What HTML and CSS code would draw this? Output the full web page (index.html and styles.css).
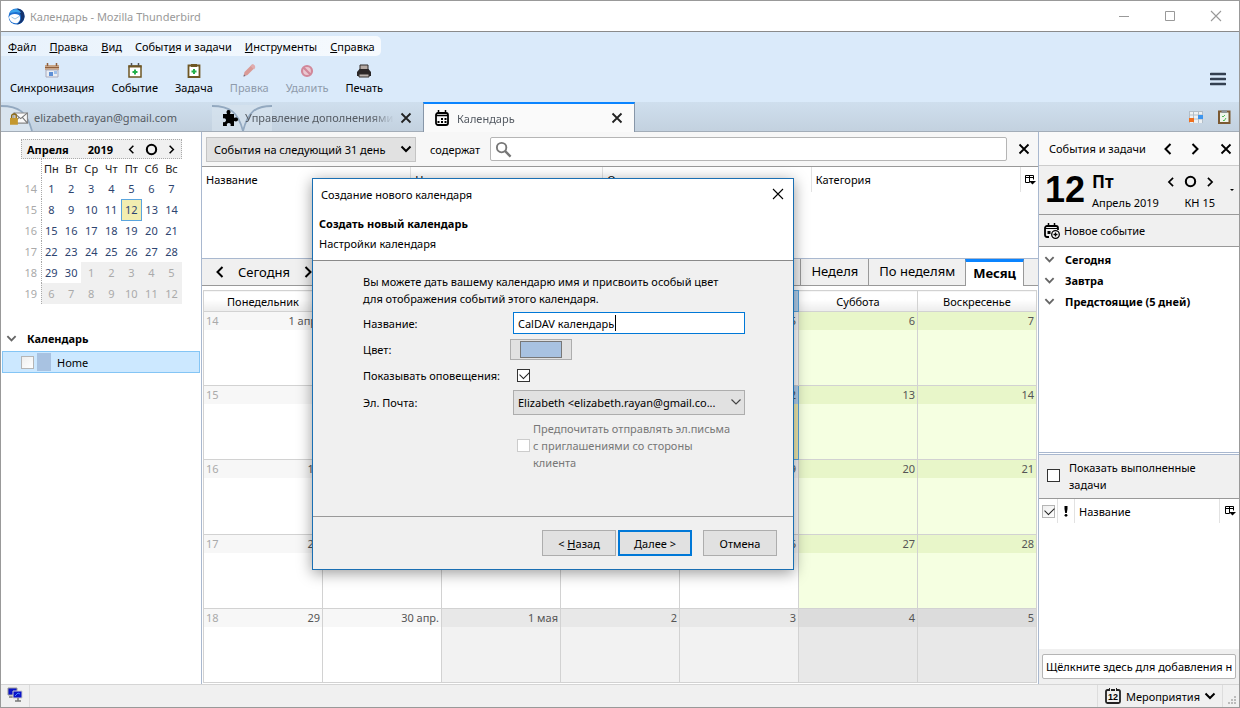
FILE: index.html
```html
<!DOCTYPE html>
<html lang="ru">
<head>
  <meta charset="UTF-8">
  <meta name="viewport" content="width=device-width, initial-scale=1.0">
  <title>Календарь - Mozilla Thunderbird</title>
  <link rel="stylesheet" href="styles.css">
</head>
<body>
  <!-- shared icons -->
  <svg class="sprite" aria-hidden="true">
    <symbol id="i-close" viewBox="0 0 12 12"><path d="M1.5 1.5l9 9M10.5 1.5l-9 9" fill="none" stroke="currentColor" stroke-width="1.8"/></symbol>
    <symbol id="i-close-thin" viewBox="0 0 12 12"><path d="M1 1l10 10M11 1L1 11" fill="none" stroke="currentColor" stroke-width="1.1"/></symbol>
    <symbol id="i-left" viewBox="0 0 12 12"><path d="M8.5 1L3.5 6l5 5" fill="none" stroke="currentColor" stroke-width="2"/></symbol>
    <symbol id="i-right" viewBox="0 0 12 12"><path d="M3.5 1l5 5-5 5" fill="none" stroke="currentColor" stroke-width="2"/></symbol>
    <symbol id="i-down" viewBox="0 0 12 12"><path d="M1.5 3.5L6 8l4.500-4.500" fill="none" stroke="currentColor" stroke-width="2"/></symbol>
    <symbol id="i-circle" viewBox="0 0 12 12"><circle cx="6" cy="6" r="4.300" fill="none" stroke="currentColor" stroke-width="1.900"/></symbol>
    <symbol id="i-picker" viewBox="0 0 12 12"><path d="M1.500 1.500h8v4M1.500 1.500v7h4M1.500 3.500h8M5.500 1.500v7" fill="none" stroke="#000"/><path d="M5 7h7L8.500 10.500z"/></symbol>
  </svg>

  <div class="window">
    <div class="titlebar">
      <svg class="app-icon" viewBox="0 0 17 17"><circle cx="8.500" cy="8.500" r="8" fill="#1c6fd0"/><path d="M9 .5c5 0 8 4 7.500 8.500-.5 4-3.500 7-7.500 7.500 4-3 5-7 3-11z" fill="#15346f"/><path d="M1.500 5C4 0 11 0 13 5L8 4z" fill="#3aa5ee"/><path d="M1 9c1-3 6-4 10-2 2 3 1 6-1.500 8C5 16 1.500 13 1 9z" fill="#fff"/><path d="M3.500 9L7 11l4-2.500" fill="none" stroke="#7fb5d8" stroke-width=".8"/></svg>
      <span class="caption">Календарь - Mozilla Thunderbird</span>
      <button class="win-btn" aria-label="Свернуть"><svg viewBox="0 0 12 12"><path d="M1 6.500h10" stroke="currentColor"/></svg></button>
      <button class="win-btn" aria-label="Развернуть"><svg viewBox="0 0 12 12"><path d="M1.500 1.500h9v9h-9z" fill="none" stroke="currentColor"/></svg></button>
      <button class="win-btn" aria-label="Закрыть"><svg><use href="#i-close-thin"/></svg></button>
    </div>

    <div class="toolbox">
      <nav class="menubar">
        <button><u>Ф</u>айл</button>
        <button><u>П</u>равка</button>
        <button><u>В</u>ид</button>
        <button>Событ<u>и</u>я и задачи</button>
        <button><u>И</u>нструменты</button>
        <button><u>С</u>правка</button>
      </nav>
      <div class="toolbar">
        <button><svg viewBox="0 0 16 16"><path d="M1 2h14v5H1z" fill="#c8a688"/><path d="M1 4.500h14" stroke="#8f5f3c"/><path d="M3.500 0v3M12.500 0v3" stroke="#8f5f3c" stroke-width="1.500"/><path d="M2 7h12v7H2z" fill="#e9eef4" stroke="#aab"/><path d="M5 9h4v4H5z" fill="#5d8fd6"/><path d="M10 8h3v3h-3z" fill="#9fc0ea"/></svg>Синхронизация</button>
        <button><svg viewBox="0 0 16 16"><path d="M2 3h12v11H2z" fill="#fff" stroke="#6e5724" stroke-width="1.500"/><path d="M1.500 2.500h13v2h-13z" fill="#6e5724"/><path d="M4.500 0v3M11.500 0v3" stroke="#555" stroke-width="1.500"/><path d="M8 6.500v5M5.500 9h5" stroke="#22b04b" stroke-width="2"/></svg>Событие</button>
        <button><svg viewBox="0 0 16 16"><path d="M2.500 2.500h11v11.500h-11z" fill="#fff" stroke="#6e5724" stroke-width="1.800"/><path d="M5 1h6v3H5z" fill="#6e5724"/><path d="M8 6v5M5.500 8.500h5" stroke="#22b04b" stroke-width="2"/></svg>Задача</button>
        <button disabled><svg viewBox="0 0 16 16"><path d="M2.500 13.500l1-4.500 7-7c1.500-1.500 4.500 1 3 3l-7 7z" fill="#d99a96"/><path d="M9.500 3l3.500 3.500 1-1.500c1-2-2-4.500-3.500-3z" fill="#e0acae"/><path d="M2.500 13.500l.500-2 1.500 1.500z" fill="#667"/></svg>Правка</button>
        <button disabled><svg viewBox="0 0 16 16"><circle cx="8" cy="8" r="5" fill="#eac7d0" stroke="#d1889a" stroke-width="2.200"/><path d="M4.500 4.500l7 7" stroke="#d1889a" stroke-width="2.200"/></svg>Удалить</button>
        <button><svg viewBox="0 0 16 16"><path d="M4 2h8v5H4z" fill="#b5aaa4" stroke="#332e2c"/><path d="M1 9l2.500-3h9L15 9v4H1z" fill="#2b2727"/><path d="M3 11h10v3H3z" fill="#b9b1ac" stroke="#332e2c"/></svg>Печать</button>
        <button class="app-menu" aria-label="Меню"><svg viewBox="0 0 16 14"><path d="M1 2h14M1 7h14M1 12h14" stroke="#344050" stroke-width="2.600" stroke-linecap="round"/></svg></button>
      </div>
    </div>

    <div class="tabstrip">
      <button class="tab tab-mail">
        <svg class="curve" viewBox="0 0 33 27"><path d="M0 2C18 2 26 8 31 27H0z" fill="#d9e4ee"/><path d="M0 2C18 2 26 8 31 27" fill="none" stroke="#93a9c0" stroke-width="1.800"/></svg>
        <svg class="tab-icon" viewBox="0 0 16 16"><path d="M3.500 3.500h12v9h-12z" fill="#fafafa" stroke="#888"/><path d="M3.500 3.500l6 5 6-5M3.500 12.500l4.500-5M15.500 12.500L11 7.500" fill="none" stroke="#777"/><path d="M0 8h7v6H0z" fill="#c4982f"/><path d="M1.500 8V6c0-2 4-2 4 0v2" fill="none" stroke="#8d6a15" stroke-width="1.300"/></svg>
        <span>elizabeth.rayan@gmail.com</span>
      </button>
      <div class="tab tab-addons">
        <svg class="curve" viewBox="0 0 60 27"><path d="M0 1h60v26H0z" fill="#d9e4ee" opacity=".6"/><path d="M0 2C18 2 26 8 31 27C36 8 43 2 60 2" fill="none" stroke="#93a9c0" stroke-width="1.800"/></svg>
        <svg class="tab-icon" viewBox="0 0 16 16"><path d="M1 4h4C4 2 4.500 0 6.500 0S9 2 8 4h4v4c2-1 4-.500 4 1.500S14 12 12 11v5H8.500c.8-2-.2-3-1.700-3s-2.500 1-1.800 3H1v-4c1.800.7 3-.3 3-1.700S2.800 7.800 1 8.500z"/></svg>
        <span class="fade">Управление дополнениями</span>
        <button class="tab-close" aria-label="Закрыть"><svg><use href="#i-close"/></svg></button>
      </div>
      <div class="tab tab-active">
        <svg class="tab-icon" viewBox="0 0 16 16"><rect x="2" y="3" width="12" height="12" rx="2" fill="none" stroke="#000" stroke-width="1.800"/><path d="M2 5.500h12" stroke="#000" stroke-width="1.500"/><path d="M4.500 0v4M11.500 0v4" stroke="#000" stroke-width="1.500"/><path d="M7 8h2v2H7zM10.500 8h2v2h-2zM3.500 11h2v2h-2zM7 11h2v2H7zM10.500 11h2v2h-2z"/></svg>
        <span class="fade">Календарь</span>
        <button class="tab-close" aria-label="Закрыть"><svg><use href="#i-close"/></svg></button>
      </div>
      <div class="tab-tools">
        <button aria-label="Календарь"><svg viewBox="0 0 16 16"><path d="M1 2h14v12H1z" fill="#eef1f3"/><path d="M1 6h14M1 10h14M5.500 2v12M10.500 2v12M1.500 2v12M1 2.500h14M14.500 2v12" stroke="#b3bec8"/><path d="M1 9h5v4H1z" fill="#f0701e"/><path d="M10 6h5v4h-5z" fill="#3d95ee"/></svg></button>
        <button aria-label="Задачи"><svg viewBox="0 0 16 16"><path d="M3 2.500h10.500V14H3z" fill="#eef5ec" stroke="#7b5a33" stroke-width="2"/><path d="M5.500 1h5.500v3H5.500z" fill="#8f959a"/><path d="M6 7l1 1 2-2M7 11l1 1 2-3" fill="none" stroke="#53b758"/></svg></button>
      </div>
    </div>

    <div class="content">
      <aside class="sidebar">
        <div class="mini">
          <div class="mini-head">
            <b class="mini-month">Апреля</b><b class="mini-year">2019</b>
            <button aria-label="Назад"><svg><use href="#i-left"/></svg></button>
            <button aria-label="Сегодня"><svg class="round"><use href="#i-circle"/></svg></button>
            <button aria-label="Вперёд"><svg><use href="#i-right"/></svg></button>
          </div>
          <table class="mini-table">
            <tr><th></th><th>Пн</th><th>Вт</th><th>Ср</th><th>Чт</th><th>Пт</th><th>Сб</th><th>Вс</th></tr>
            <tr><td>14</td><td>1</td><td>2</td><td>3</td><td>4</td><td>5</td><td>6</td><td>7</td></tr>
            <tr><td>15</td><td>8</td><td>9</td><td>10</td><td>11</td><td class="today">12</td><td>13</td><td>14</td></tr>
            <tr><td>16</td><td>15</td><td>16</td><td>17</td><td>18</td><td>19</td><td>20</td><td>21</td></tr>
            <tr><td>17</td><td>22</td><td>23</td><td>24</td><td>25</td><td>26</td><td>27</td><td>28</td></tr>
            <tr><td>18</td><td>29</td><td>30</td><td class="other">1</td><td class="other">2</td><td class="other">3</td><td class="other">4</td><td class="other">5</td></tr>
            <tr><td>19</td><td class="other">6</td><td class="other">7</td><td class="other">8</td><td class="other">9</td><td class="other">10</td><td class="other">11</td><td class="other">12</td></tr>
          </table>
        </div>
        <button class="twisty"><svg><use href="#i-down"/></svg>Календарь</button>
        <label class="cal-item"><input type="checkbox" class="check check-soft"><span class="swatch"></span>Home</label>
      </aside>

      <main class="main">
        <div class="filterbar">
          <div class="select-wrap filter-select">
            <select class="select" aria-label="Период"><option>События на следующий 31 день</option></select>
            <svg><use href="#i-down"/></svg>
          </div>
          <label for="search">содержат</label>
          <div class="search">
            <svg viewBox="0 0 18 18"><circle cx="7" cy="7" r="5" fill="none" stroke="#777" stroke-width="2"/><path d="M10.500 10.500l6 6" stroke="#777" stroke-width="2.500"/></svg>
            <input type="text" id="search">
          </div>
          <button class="filter-close" aria-label="Закрыть"><svg><use href="#i-close"/></svg></button>
        </div>
        <div class="event-list">
          <table class="tree-head">
            <tr><th>Название<span class="sort">▴</span></th><th>Начало</th><th>Окончание</th><th>Категория</th><th class="picker"><svg><use href="#i-picker"/></svg></th></tr>
          </table>
        </div>
        <div class="viewbar">
          <button aria-label="Назад"><svg><use href="#i-left"/></svg></button>
          <button class="today-btn">Сегодня</button>
          <button aria-label="Вперёд"><svg><use href="#i-right"/></svg></button>
          <div class="views">
            <button>День</button>
            <button>Неделя</button>
            <button>По неделям</button>
            <button class="on">Месяц</button>
          </div>
        </div>
        <div class="month-wrap">
          <table class="month">
            <thead>
              <tr><th>Понедельник</th><th>Вторник</th><th>Среда</th><th>Четверг</th><th class="now">Пятница</th><th>Суббота</th><th>Воскресенье</th></tr>
            </thead>
            <tbody>
              <tr><td><div><i>14</i>1 апр.</div></td><td><div>2</div></td><td><div>3</div></td><td><div>4</div></td><td><div>5</div></td><td class="we"><div>6</div></td><td class="we"><div>7</div></td></tr>
              <tr><td><div><i>15</i>8</div></td><td><div>9</div></td><td><div>10</div></td><td><div>11</div></td><td class="now"><div>12</div></td><td class="we"><div>13</div></td><td class="we"><div>14</div></td></tr>
              <tr><td><div><i>16</i>15</div></td><td><div>16</div></td><td><div>17</div></td><td><div>18</div></td><td><div>19</div></td><td class="we"><div>20</div></td><td class="we"><div>21</div></td></tr>
              <tr><td><div><i>17</i>22</div></td><td><div>23</div></td><td><div>24</div></td><td><div>25</div></td><td><div>26</div></td><td class="we"><div>27</div></td><td class="we"><div>28</div></td></tr>
              <tr><td><div><i>18</i>29</div></td><td><div>30 апр.</div></td><td class="off"><div>1 мая</div></td><td class="off"><div>2</div></td><td class="off"><div>3</div></td><td class="we off"><div>4</div></td><td class="we off"><div>5</div></td></tr>
            </tbody>
          </table>
        </div>
      </main>

      <aside class="today-pane">
        <div class="pane-head">
          <span>События и задачи</span>
          <button aria-label="Назад"><svg><use href="#i-left"/></svg></button>
          <button aria-label="Вперёд"><svg><use href="#i-right"/></svg></button>
          <button class="pane-close" aria-label="Закрыть"><svg><use href="#i-close"/></svg></button>
        </div>
        <div class="day">
          <div class="day-num">12</div>
          <div class="day-info">
            <div class="day-row">
              <b>Пт</b>
              <button aria-label="Назад"><svg><use href="#i-left"/></svg></button>
              <button aria-label="Сегодня"><svg class="round"><use href="#i-circle"/></svg></button>
              <button aria-label="Вперёд"><svg><use href="#i-right"/></svg></button>
            </div>
            <div class="day-sub"><span>Апрель 2019</span><span>КН 15</span></div>
          </div>
          <button class="day-drop" aria-label="Открыть"><svg viewBox="0 0 6 6"><path d="M1 2h4L3 4z"/></svg></button>
        </div>
        <button class="new-event"><svg viewBox="0 0 16 16"><path d="M5 14H3c-1 0-2-.700-2-2V5c0-1 1-2 2-2h9c1 0 2 1 2 2v2" fill="none" stroke="#000" stroke-width="1.800"/><path d="M4.500 0v4M10.500 0v4" stroke="#000" stroke-width="1.500"/><path d="M1 5.500h13" stroke="#000"/><path d="M3.500 8h3v3h-3z"/><circle cx="11.500" cy="11.500" r="3.800" fill="#fff" stroke="#000" stroke-width="1.300"/><path d="M11.500 9.500v4M9.500 11.500h4" stroke="#000" stroke-width="1.300"/></svg>Новое событие</button>
        <div class="agenda">
          <button class="twisty"><svg><use href="#i-down"/></svg>Сегодня</button>
          <button class="twisty"><svg><use href="#i-down"/></svg>Завтра</button>
          <button class="twisty"><svg><use href="#i-down"/></svg>Предстоящие (5 дней)</button>
        </div>
        <label class="show-done"><input type="checkbox" class="check"><span>Показать выполненные задачи</span></label>
        <div class="todo-head">
          <span class="c-check"><input type="checkbox" class="check check-soft" aria-label="Выполнено" checked></span>
          <span class="c-prio"><svg viewBox="0 0 6 12"><path d="M1.500 1h3v3l-.700 4H2.200l-.700-4z"/><circle cx="3" cy="10.300" r="1.400"/></svg></span>
          <span class="c-name">Название</span>
          <span class="c-pick"><svg><use href="#i-picker"/></svg></span>
        </div>
        <div class="todo-list"></div>
        <div class="quick-add"><input type="text" aria-label="Новая задача" value="Щёлкните здесь для добавления новой задачи"></div>
      </aside>
    </div>

    <footer class="statusbar">
      <span class="online"><svg viewBox="0 0 16 16"><path d="M1 1h9v7H1z" fill="#0a14c8" stroke="#999"/><path d="M2 10h5" stroke="#777" stroke-width="1.500"/><path d="M6 4h9v7H6z" fill="#0a14c8" stroke="#ccc"/><path d="M8 9l3-3 2 1" fill="none" stroke="#48f"/><path d="M8 14h6M11 11v3" stroke="#777" stroke-width="1.500"/></svg></span>
      <button class="events-btn"><svg class="cal12" viewBox="0 0 18 18"><path d="M5 3H3.500C2.500 3 2 3.500 2 4.500v10c0 1 .500 1.500 1.500 1.500h11c1 0 1.500-.500 1.500-1.500v-10c0-1-.500-1.500-1.500-1.500H13M7 3h4" fill="none" stroke="#222" stroke-width="1.800"/><path d="M5.500 1v3M12.500 1v3" stroke="#222"/><text x="9" y="13" text-anchor="middle">12</text></svg>Мероприятия<svg><use href="#i-down"/></svg></button>
      <svg class="grip" viewBox="0 0 10 10"><path d="M7 1h2v2H7zM4 4h2v2H4zM7 4h2v2H7zM1 7h2v2H1zM4 7h2v2H4zM7 7h2v2H7z" fill="#bbb"/></svg>
    </footer>
  </div>

  <!-- new calendar wizard -->
  <form class="dialog" role="dialog" aria-labelledby="dlg-title">
    <div class="dlg-head">
      <div class="dlg-caption"><span id="dlg-title">Создание нового календаря</span><button type="button" aria-label="Закрыть"><svg><use href="#i-close-thin"/></svg></button></div>
      <h1>Создать новый календарь</h1>
      <p>Настройки календаря</p>
    </div>
    <div class="dlg-body">
      <p>Вы можете дать вашему календарю имя и присвоить особый цвет для отображения событий этого календаря.</p>
      <div class="fields">
        <label for="cal-name">Название:</label>
        <div class="name-box"><input type="text" id="cal-name" value="CalDAV календарь"><span class="caret"></span></div>
        <label for="cal-color">Цвет:</label>
        <div><button type="button" class="color-btn" id="cal-color"><span></span></button></div>
        <label for="cal-alarm">Показывать оповещения:</label>
        <div class="alarm"><input type="checkbox" class="check" id="cal-alarm" checked></div>
        <label for="cal-mail">Эл. Почта:</label>
        <div class="select-wrap">
          <select class="select" id="cal-mail"><option>Elizabeth &lt;elizabeth.rayan@gmail.co...</option></select>
          <svg class="thin" viewBox="0 0 12 12"><path d="M1.500 3.500L6 8l4.500-4.500" fill="none" stroke="#444" stroke-width="1.200"/></svg>
        </div>
      </div>
      <label class="prefer"><input type="checkbox" class="check" disabled><span>Предпочитать отправлять эл.письма с приглашениями со стороны клиента</span></label>
    </div>
    <div class="dlg-foot">
      <button type="button">&lt; <u>Н</u>азад</button>
      <button type="button" class="default"><u>Д</u>алее &gt;</button>
      <button type="button" class="cancel">Отмена</button>
    </div>
  </form>
</body>
</html>
```
FILE: styles.css
```css
/* basic */
* {
  box-sizing: border-box;
}
body {
  margin: 0;
  font-family: "Noto Sans", "Open Sans", sans-serif;
  font-size: 11px;
  line-height: 17px;
  color: #000;
}
button, input, select {
  font: inherit;
  color: inherit;
}
button {
  padding: 0;
  border: none;
  background: none;
  white-space: nowrap;
}
svg {
  display: block;
  flex: none;
  width: 12px;
  height: 12px;
}
p, h1 {
  margin: 0;
}
.sprite {
  position: absolute;
  width: 0;
  height: 0;
}

.window {
  display: flex;
  flex-direction: column;
  height: 100vh;
  border: 1px solid #999;
  background: #f0f0f0;
  overflow: hidden;
}

/* title bar */
.titlebar {
  display: flex;
  align-items: center;
  height: 31px;
  flex: none;
  padding-left: 7px;
  background: #fff;
  border-bottom: 1px solid #8a8a8a;
  color: #999;
}
.app-icon {
  width: 17px;
  height: 17px;
}
.caption {
  flex: 1;
  margin-left: 5px;
}
.win-btn {
  display: flex;
  justify-content: center;
  width: 46px;
}

/* menu and toolbar */
.toolbox {
  flex: none;
  height: 70px;
  padding-top: 4px;
  background: #daeafa;
}
.menubar {
  display: flex;
  width: fit-content;
  gap: 13px;
  height: 20px;
  padding: 0 6px 0 7px;
  background: linear-gradient(to right, #e8f2fc, #f6fafe);
  border-radius: 0 5px 5px 0;
}
.toolbar {
  display: flex;
  align-items: flex-start;
  gap: 17px;
  padding: 7px 13px 0 9px;
}
.toolbar button {
  display: flex;
  flex-direction: column;
  align-items: center;
}
.toolbar svg {
  width: 16px;
  height: 16px;
}
.toolbar button:disabled {
  color: #8f9bab;
}
.toolbar .app-menu {
  margin: 8px 0 0 auto;
}

/* tabs */
.tabstrip {
  display: flex;
  flex: none;
  height: 30px;
  background: linear-gradient(#cfdfee, #c3d1df);
  border-bottom: 1px solid #a3adb8;
  color: #555b63;
}
.tab {
  position: relative;
  display: flex;
  align-items: center;
  gap: 6px;
  width: 211px;
  padding: 2px 11px 0 9px;
}
.tab .curve {
  position: absolute;
  left: 0;
  top: 2px;
  width: 33px;
  height: 27px;
}
.tab-addons .curve {
  width: 60px;
}
.tab-icon {
  position: relative;
  width: 18px;
  height: 16px;
}
.tab-mail .tab-icon {
  height: 18px;
}
.tab span {
  position: relative;
}
.fade {
  flex: 1;
  min-width: 0;
  overflow: hidden;
  white-space: nowrap;
  mask-image: linear-gradient(to right, #000 85%, transparent);
}
.tab-close {
  color: #222;
}
.tab-active {
  width: 212px;
  height: 30px;
  padding-top: 0;
  background: #fafafa;
  border: 1px solid #8796a8;
  border-top: 2px solid #0a84ff;
  border-bottom: none;
}
.tab-tools {
  display: flex;
  align-items: center;
  gap: 12px;
  margin-left: auto;
  padding-right: 7px;
}
.tab-tools svg {
  width: 16px;
  height: 16px;
}

/* columns */
.content {
  display: flex;
  flex: 1;
  min-height: 0;
  background: #fff;
}
.check {
  appearance: none;
  flex: none;
  position: relative;
  width: 13px;
  height: 13px;
  margin: 0;
  background: #fff;
  border: 1px solid #333;
}
.check:checked::after {
  content: "";
  position: absolute;
  left: 2px;
  top: 1px;
  width: 8px;
  height: 5px;
  border-left: 1px solid #222;
  border-bottom: 1px solid #222;
  transform: rotate(-45deg);
}
.check:disabled {
  border-color: #ccc;
}
.check-soft {
  background: linear-gradient(135deg, #eee, #fff);
  border-color: #b5b5b5;
}
.twisty {
  display: flex;
  align-items: center;
  gap: 10px;
  height: 21px;
  padding-left: 5px;
  font-weight: 700;
}
.twisty svg {
  width: 11px;
  height: 11px;
  color: #666;
}

/* left pane */
.sidebar {
  width: 201px;
  flex: none;
  border-right: 1px solid #a9b8cf;
}
.mini {
  width: 161px;
  margin: 7px 0 24px 20px;
}
.mini-head {
  display: flex;
  align-items: center;
  height: 20px;
  padding-left: 5px;
  background: #f0f0f0;
  border: 1px dotted #aaa;
}
.mini-year {
  margin-left: auto;
  margin-right: 8px;
}
.mini-head button {
  width: 20px;
  display: flex;
  justify-content: center;
}
.mini-head svg {
  width: 9px;
  height: 9px;
}
.mini-head .round, .day .round {
  width: 13px;
  height: 13px;
}
.mini-table {
  width: 100%;
  table-layout: fixed;
  border-collapse: collapse;
}
.mini-table th, .mini-table td {
  height: 21px;
  padding: 0;
  font-weight: 400;
  text-align: center;
  color: #2d4470;
}
.mini-table th {
  height: 19px;
  color: #222;
}
.mini-table tr > :first-child {
  border-right: 1px dotted #aaa;
  color: #aaa;
}
.mini-table .today {
  background: #f2edb0;
  border: 1px solid #5ba5dd;
}
.mini-table .other {
  background: #f0f0f0;
  color: #aaa;
}
.cal-item {
  display: flex;
  align-items: center;
  height: 22px;
  margin: 2px 1px 0 1px;
  padding-left: 18px;
  background: #cce8ff;
  border: 1px solid #84c5f5;
}
.swatch {
  width: 14px;
  height: 18px;
  margin: 0 6px 0 3px;
  background: #a8c2e1;
}

/* centre pane */
.main {
  display: flex;
  flex-direction: column;
  flex: 1;
  min-width: 0;
}
.filterbar {
  display: flex;
  align-items: center;
  flex: none;
  height: 35px;
  padding: 0 8px 0 4px;
  background: #f7f7f7;
  border-bottom: 1px solid #999;
}
.select-wrap {
  position: relative;
}
.select {
  appearance: none;
  display: block;
  width: 100%;
  height: 25px;
  padding: 0 20px 0 4px;
  background: #e1e1e1;
  border: 1px solid #adadad;
  border-radius: 0;
}
.select-wrap svg {
  position: absolute;
  right: 4px;
  top: 6px;
}
.filter-select {
  width: 210px;
}
.filter-select .select {
  padding-left: 7px;
  border-color: #c4c4c4;
}
.filterbar label {
  margin: 0 10px 0 14px;
}
.search {
  display: flex;
  align-items: center;
  flex: 1;
  height: 24px;
  padding-left: 4px;
  background: #fff;
  border: 1px solid #b5b5b5;
  border-radius: 2px;
}
.search svg {
  width: 17px;
  height: 17px;
}
.search input {
  flex: 1;
  border: none;
  background: none;
}
.filter-close {
  margin-left: 11px;
}
.event-list {
  flex: none;
  height: 92px;
  border-bottom: 1px solid #a9b8cf;
}
.tree-head {
  width: 100%;
  table-layout: fixed;
  border-collapse: collapse;
}
.tree-head th {
  width: 25%;
  height: 25px;
  padding: 0 4px;
  border-right: 1px solid #e2e2e2;
  font-weight: 400;
  text-align: left;
}
.tree-head th:nth-child(2) {
  width: 23%;
}
.tree-head .picker {
  width: 18px;
  padding: 0 0 0 3px;
  border: none;
}
.sort {
  float: right;
  font-size: 8px;
}
.viewbar {
  display: flex;
  align-items: center;
  gap: 12px;
  flex: none;
  height: 27px;
  padding-left: 12px;
  background: #f0f0f0;
  border-bottom: 1px solid #999;
  font-size: 13px;
}
.views {
  display: flex;
  height: 27px;
  margin: 0 14px 0 auto;
}
.views button {
  padding: 0 10px;
  border: 1px solid #999;
  border-width: 0 0 1px 1px;
}
.views .on {
  padding: 0 7px;
  background: #fff;
  border-width: 3px 1px 0 1px;
  border-top-color: #0a84ff;
  font-weight: 700;
}

/* month grid */
.month-wrap {
  flex: 1;
  min-height: 0;
  padding: 4px 1px 1px 1px;
}
.month {
  width: 100%;
  height: 100%;
  table-layout: fixed;
  border-collapse: collapse;
}
.month th, .month td {
  padding: 0;
  border: 1px solid #d2d2d2;
  vertical-align: top;
}
.month th {
  height: 21px;
  vertical-align: middle;
  font-weight: 400;
  background: linear-gradient(#fff 40%, #ececec);
}
.month div {
  display: flex;
  justify-content: flex-end;
  padding: 0 2px;
  line-height: 18px;
  background: #f7f7f7;
  color: #555;
}
.month i {
  margin-right: auto;
  font-style: normal;
  color: #aaa;
}
.month .we {
  background: #f5ffe1;
}
.month .we div {
  background: #e8f6c9;
}
.month .off {
  background: #f2f2f2;
}
.month .off div {
  background: #e8e8e8;
}
.month .we.off {
  background: #e8e8e8;
}
.month .we.off div {
  background: #dcdcdc;
}
.month .now {
  background: #f2edb0;
  border: 1px solid #5ba5dd;
}
.month th.now, .month .now div {
  background: #b5d2ee;
}

/* today pane */
.today-pane {
  display: flex;
  flex-direction: column;
  flex: none;
  width: 201px;
  border-left: 1px solid #a9b8cf;
}
.pane-head {
  display: flex;
  align-items: center;
  gap: 15px;
  height: 34px;
  padding: 0 7px 0 10px;
  background: #f9f9f9;
  border-bottom: 1px solid #ccc;
}
.pane-head span {
  flex: 1;
  white-space: nowrap;
}
.pane-head .pane-close {
  margin-left: 4px;
}
.day {
  display: flex;
  align-items: center;
  height: 49px;
  padding: 0 4px 0 6px;
  background: #f0f0f0;
  border-bottom: 1px solid #999;
}
.day-num {
  width: 47px;
  font: 700 36px/40px "Liberation Sans", Arial, sans-serif;
}
.day-info {
  flex: 1;
}
.day-row {
  display: flex;
  align-items: center;
  gap: 8px;
  height: 24px;
}
.day-row b {
  flex: 1;
  font-size: 17px;
}
.day-row svg {
  width: 10px;
  height: 10px;
}
.day-sub {
  display: flex;
  justify-content: space-between;
  white-space: nowrap;
}
.day-drop svg {
  width: 6px;
  height: 6px;
}
.day-drop {
  margin-left: 14px;
}
.new-event {
  display: flex;
  align-items: center;
  gap: 4px;
  height: 32px;
  padding-left: 5px;
  background: #f0f0f0;
  border-bottom: 1px solid #999;
}
.new-event svg {
  width: 16px;
  height: 16px;
}
.agenda {
  height: 208px;
  padding-top: 2px;
  border-bottom: 3px double #a9b8cf;
}
.show-done {
  display: flex;
  align-items: center;
  gap: 9px;
  height: 44px;
  padding: 0 30px 2px 8px;
  background: #f0f0f0;
  border-bottom: 1px solid #999;
}
.todo-head {
  display: flex;
  height: 24px;
}
.todo-head > span {
  display: flex;
  align-items: center;
  justify-content: center;
  border-right: 1px solid #e2e2e2;
}
.c-check, .c-pick {
  width: 19px;
}
.c-prio {
  width: 17px;
}
.c-prio svg {
  width: 6px;
}
.todo-head .c-name {
  flex: 1;
  justify-content: flex-start;
  padding-left: 4px;
}
.todo-head .c-pick {
  border: none;
}
.todo-list {
  flex: 1;
}
.quick-add {
  padding: 5px 3px;
  background: #f0f0f0;
}
.quick-add input {
  display: block;
  width: 100%;
  height: 25px;
  padding: 0 3px;
  background: #fff;
  border: 1px solid #b5b5b5;
  border-radius: 2px;
}

/* status bar */
.statusbar {
  display: flex;
  flex: none;
  height: 23px;
  border-top: 1px solid #d5d5d5;
  background: #f0f0f0;
}
.online {
  width: 29px;
  padding: 2px 6px;
  border-right: 1px solid #ddd;
}
.online svg {
  width: 16px;
  height: 16px;
}
.events-btn {
  display: flex;
  align-items: center;
  gap: 4px;
  margin-left: auto;
  padding: 0 6px;
  border: 1px solid #ddd;
  border-width: 0 1px;
}
.cal12 {
  width: 18px;
  height: 18px;
}
.cal12 text {
  font: 700 9px "Liberation Sans", Arial, sans-serif;
}
.grip {
  align-self: flex-end;
  width: 10px;
  height: 10px;
  margin: 0 2px 2px 4px;
}

/* wizard window */
.dialog {
  position: absolute;
  left: 312px;
  top: 178px;
  width: 482px;
  background: #f0f0f0;
  border: 1px solid #1a6fb3;
  box-shadow: 0 3px 14px rgba(0, 0, 0, 0.4);
}
.dlg-head {
  height: 82px;
  padding: 0 9px 0 6px;
  background: #fff;
  border-bottom: 1px solid #8a8a8a;
}
.dlg-caption {
  display: flex;
  align-items: center;
  justify-content: space-between;
  height: 30px;
  margin: 0 0 6px 2px;
}
.dlg-head h1 {
  font-size: 11px;
  line-height: 17px;
}
.dlg-head p {
  margin-top: 3px;
}
.dlg-body {
  height: 255px;
  padding: 12px 60px 0 50px;
}
.fields {
  display: grid;
  grid-template-columns: 150px 232px;
  align-items: center;
  row-gap: 5px;
  margin-top: 5px;
}
.name-box {
  position: relative;
}
.name-box input {
  display: block;
  width: 100%;
  height: 22px;
  padding: 0 4px;
  background: #fff;
  border: 1px solid #0078d7;
  outline: none;
}
.caret {
  position: absolute;
  left: 102px;
  top: 3px;
  width: 1px;
  height: 16px;
  background: #000;
}
.color-btn {
  display: block;
  width: 62px;
  height: 21px;
  margin-left: -3px;
  padding: 1px 9px;
  background: #e1e1e1;
  border: 1px solid #adadad;
}
.color-btn span {
  display: block;
  height: 17px;
  background: #a8c2e1;
  border: 1px solid #777;
}
.alarm {
  display: flex;
  align-items: center;
  height: 20px;
  padding-left: 4px;
}
.fields .select-wrap .thin {
  right: 3px;
}
.prefer {
  display: flex;
  align-items: center;
  gap: 3px;
  width: 214px;
  margin: 5px 0 0 154px;
  color: #777;
}
.dlg-foot {
  display: flex;
  justify-content: flex-end;
  gap: 2px;
  height: 53px;
  padding: 13px 16px 0;
  border-top: 1px solid #999;
}
.dlg-foot button {
  width: 74px;
  height: 26px;
  background: #e1e1e1;
  border: 1px solid #adadad;
}
.dlg-foot .default {
  border: 2px solid #0078d7;
}
.dlg-foot .cancel {
  margin-left: 9px;
}
```
